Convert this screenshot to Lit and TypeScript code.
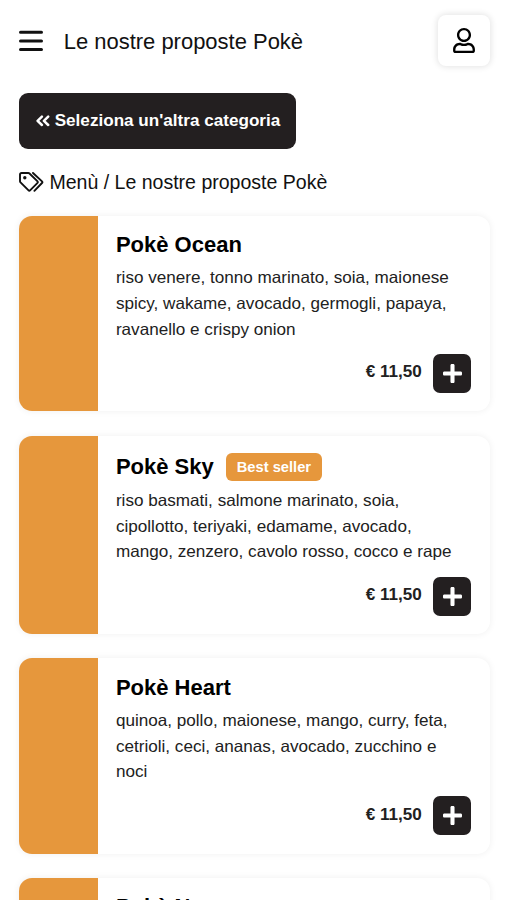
import { LitElement, html, css, nothing } from "lit";
import { customElement, property } from "lit/decorators.js";

interface Dish {
  name: string;
  description: string;
  price: string;
  badge?: string;
}

const dishes: Dish[] = [
  {
    name: "Pokè Ocean",
    description:
      "riso venere, tonno marinato, soia, maionese spicy, wakame, avocado, germogli, papaya, ravanello e crispy onion",
    price: "€ 11,50",
  },
  {
    name: "Pokè Sky",
    description:
      "riso basmati, salmone marinato, soia, cipollotto, teriyaki, edamame, avocado, mango, zenzero, cavolo rosso, cocco e rape",
    price: "€ 11,50",
    badge: "Best seller",
  },
  {
    name: "Pokè Heart",
    description:
      "quinoa, pollo, maionese, mango, curry, feta, cetrioli, ceci, ananas, avocado, zucchino e noci",
    price: "€ 11,50",
  },
  { name: "Pokè Nemo", description: "", price: "€ 11,50" },
];

@customElement("dish-card")
export class DishCard extends LitElement {
  @property({ attribute: false }) dish!: Dish;

  static styles = css`
    :host {
      display: block;
    }
    .card {
      display: flex;
      box-sizing: border-box;
      min-height: 195.5px;
      border-radius: 13px;
      overflow: hidden;
      background: #fff;
      box-shadow: 0 0 6px 1px rgba(0, 0, 0, 0.05);
    }
    .card.tagged {
      min-height: 198.5px;
    }
    .thumb {
      flex: 0 0 78.5px;
      background: #e6973c;
    }
    .body {
      flex: 1;
      min-width: 0;
      display: flex;
      flex-direction: column;
      padding: 15.2px 18.2px 18.4px 18px;
    }
    .heading {
      display: flex;
      align-items: center;
      gap: 12px;
      min-height: 27px;
    }
    .tagged .heading {
      min-height: 31px;
    }
    .name {
      margin: 0;
      font-size: 22px;
      line-height: 27px;
      font-weight: 700;
      color: #000;
    }
    .badge {
      margin-top: 2px;
      padding: 0 11px;
      border-radius: 6px;
      background: #e6973c;
      color: #fff;
      font-size: 14.7px;
      line-height: 28px;
      font-weight: 700;
    }
    .description {
      margin: 7.5px 0 0;
      font-size: 17.13px;
      line-height: 25.6px;
      color: #212121;
    }
    .tagged .description {
      margin-top: 6.5px;
    }
    .buy {
      display: flex;
      justify-content: flex-end;
      align-items: center;
      gap: 11px;
      margin-top: auto;
    }
    .price {
      font-size: 17.1px;
      line-height: 24px;
      margin-bottom: 2px;
      font-weight: 700;
      color: #212121;
    }
    .add {
      display: flex;
      align-items: center;
      justify-content: center;
      width: 38.5px;
      height: 39px;
      padding: 0;
      border: 0;
      border-radius: 7px;
      background: #231f20;
      color: #fff;
    }
    .plus {
      width: 19px;
      height: 19px;
    }
  `;

  render() {
    const { name, description, price, badge } = this.dish;
    return html`
      <article class="card ${badge ? "tagged" : ""}">
        <div class="thumb"></div>
        <div class="body">
          <div class="heading">
            <h2 class="name">${name}</h2>
            ${badge ? html`<span class="badge">${badge}</span>` : nothing}
          </div>
          <p class="description">${description}</p>
          <div class="buy">
            <span class="price">${price}</span>
            <button class="add" aria-label="Aggiungi">
              <svg class="plus" viewBox="0 32 448 448" fill="currentColor">
                <path d="M416 208H272V64c0-17.67-14.33-32-32-32h-32c-17.67 0-32 14.33-32 32v144H32c-17.67 0-32 14.33-32 32v32c0 17.67 14.33 32 32 32h144v144c0 17.67 14.33 32 32 32h32c17.67 0 32-14.33 32-32V304h144c17.67 0 32-14.33 32-32v-32c0-17.67-14.33-32-32-32z" />
              </svg>
            </button>
          </div>
        </div>
      </article>
    `;
  }
}

@customElement("app-root")
export class AppRoot extends LitElement {
  static styles = css`
    :host {
      display: block;
      box-sizing: border-box;
      height: 900px;
      overflow: hidden;
      padding: 15px 17.5px 0 19.4px;
      background: #fff;
      color: #111;
      font-family: "Liberation Sans", Arial, sans-serif;
    }
    .topbar {
      display: flex;
      align-items: center;
      height: 51px;
    }
    .menu {
      width: 24px;
      height: 21px;
    }
    .title {
      flex: 1;
      margin: 2px 0 0 20.3px;
      font-size: 21.97px;
      line-height: 26px;
      font-weight: 400;
    }
    .account {
      display: flex;
      align-items: center;
      justify-content: center;
      width: 52px;
      height: 51px;
      padding: 0 0 1px;
      box-sizing: border-box;
      border: 0;
      border-radius: 8px;
      background: #fff;
      color: #000;
      box-shadow: 0 0 6px 1px rgba(0, 0, 0, 0.11);
    }
    .user {
      width: 22px;
      height: 25px;
    }
    .back {
      display: flex;
      align-items: center;
      gap: 5px;
      width: 276.7px;
      height: 55.5px;
      margin-top: 27px;
      padding: 0 0 0 16.3px;
      box-sizing: border-box;
      border: 0;
      border-radius: 9px;
      background: #231f20;
      color: #fff;
      font-family: inherit;
      font-size: 17.13px;
      font-weight: 700;
      white-space: nowrap;
    }
    .chevrons {
      flex: none;
      width: 14px;
      height: 12px;
    }
    .crumbs {
      display: flex;
      align-items: center;
      gap: 5px;
      height: 26px;
      margin-top: 20.5px;
      font-size: 19.55px;
    }
    .tags {
      width: 25px;
      height: 20px;
    }
    .list {
      display: flex;
      flex-direction: column;
      gap: 24.35px;
      margin-top: 20.7px;
    }
  `;

  render() {
    return html`
      <header class="topbar">
        <svg class="menu" viewBox="0 0 24 21" fill="none" stroke="currentColor" stroke-width="3" stroke-linecap="round">
          <path d="M1.5 2.3H22.5M1.5 11H22.5M1.5 19.5H22.5" />
        </svg>
        <h1 class="title">Le nostre proposte Pokè</h1>
        <button class="account" aria-label="Account">
          <svg class="user" viewBox="0 0 448 512" fill="currentColor">
            <path d="M313.6 304c-28.7 0-42.5 16-89.6 16-47.1 0-60.8-16-89.6-16C60.2 304 0 364.2 0 438.4V464c0 26.5 21.5 48 48 48h352c26.5 0 48-21.5 48-48v-25.6c0-74.2-60.2-134.4-134.4-134.4zM400 464H48v-25.6c0-47.6 38.8-86.4 86.4-86.4 14.6 0 38.3 16 89.6 16 51.7 0 74.9-16 89.6-16 47.6 0 86.4 38.8 86.4 86.4V464zM224 288c79.5 0 144-64.5 144-144S303.5 0 224 0 80 64.5 80 144s64.5 144 144 144zm0-240c52.9 0 96 43.1 96 96s-43.1 96-96 96-96-43.1-96-96 43.1-96 96-96z" />
          </svg>
        </button>
      </header>
      <button class="back">
        <svg class="chevrons" viewBox="0 0 14 12" fill="none" stroke="currentColor" stroke-width="2.5" stroke-linecap="round" stroke-linejoin="round">
          <path d="M5.9 1.6L1.6 5.8L5.9 10M12.2 1.6L7.9 5.8L12.2 10" />
        </svg>
        <span>Seleziona un'altra categoria</span>
      </button>
      <nav class="crumbs">
        <svg class="tags" viewBox="0 0 25 20" fill="none" stroke="currentColor" stroke-width="1.9" stroke-linecap="round" stroke-linejoin="round">
          <path d="M1 2.6V9.2Q1 9.9 1.5 10.4L9.3 18.2Q10.3 19.2 11.3 18.2L18.3 11.2Q19.3 10.2 18.3 9.2L10.5 1.5Q10 1 9.3 1H2.6Q1 1 1 2.6Z" />
          <path d="M14 1L23 9.4Q23.8 10.2 23 11L15.4 18.8" />
          <circle cx="5.8" cy="5.8" r="1.7" fill="currentColor" stroke="none" />
        </svg>
        <span>Menù / Le nostre proposte Pokè</span>
      </nav>
      <main class="list">
        ${dishes.map((dish) => html`<dish-card .dish=${dish}></dish-card>`)}
      </main>
    `;
  }
}
